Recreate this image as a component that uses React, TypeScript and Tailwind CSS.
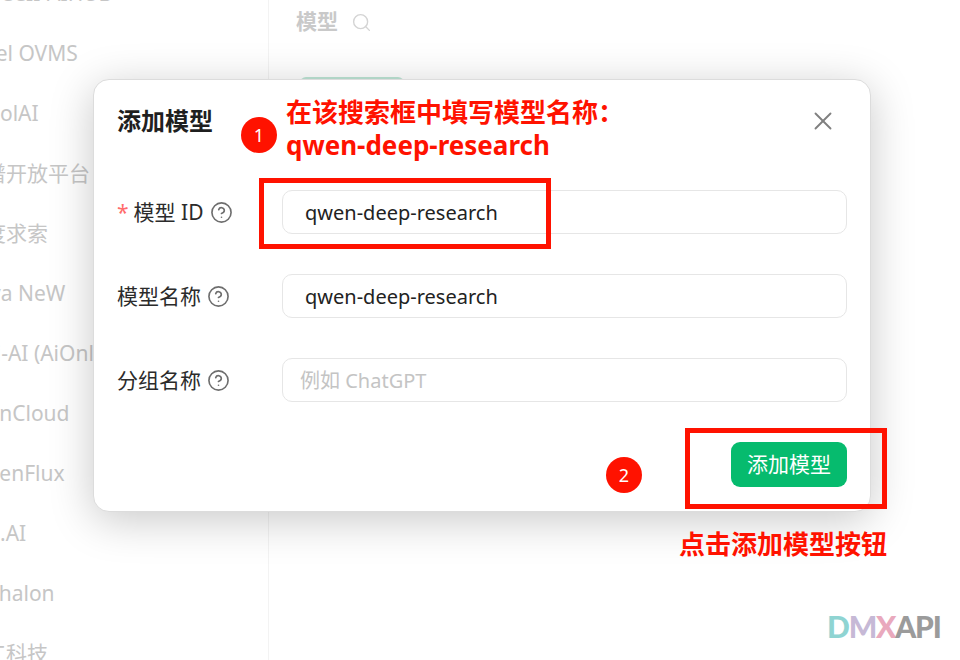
import React from 'react';
import { CircleHelp, Search, X } from 'lucide-react';

const fontStack = "font-['Noto_Sans','Noto_Sans_CJK_SC',sans-serif]";

const providers = [
  { name: 'CCII-AIHUB', cls: 'ml-0' },
  { name: 'Intel OVMS', cls: '-ml-[32px]' },
  { name: 'CoolAI', cls: '-ml-[26px]' },
  { name: '智谱开放平台', cls: '-ml-[36px]' },
  { name: '深度求索', cls: '-ml-[36px]' },
  { name: 'Kuya NeW', cls: '-ml-[36px]' },
  { name: 'Infini-AI (AiOnly)', cls: '-ml-[50px]' },
  { name: 'GreenCloud', cls: '-ml-[48px]' },
  { name: 'OpenFlux', cls: '-ml-[30px]' },
  { name: '302.AI', cls: '-ml-[36px]' },
  { name: 'Phalon', cls: '-ml-[14px]' },
  { name: '天工科技', cls: '-ml-[36px]' },
];

const FieldRow = ({
  label,
  required,
  value,
  placeholder,
}: {
  label: string;
  required?: boolean;
  value?: string;
  placeholder?: string;
}) => (
  <div className="flex items-center h-[44px]">
    <div className="w-[165px] flex items-center text-[21px] pt-[1px] text-[#2b2b2b]">
      {required && <span className="text-[#ff6b6b] mr-[5px] text-[21px]">*</span>}
      <span>{label}</span>
      <CircleHelp className="ml-[6px] text-[#6e6e6e]" size={23} strokeWidth={1.7} />
    </div>
    <div className="flex-1 h-[44px] border border-[#e6e6e6] rounded-[10px] flex items-center pl-[22px] pt-[1px] text-[20px]">
      {value ? (
        <span className="text-[#222]">{value}</span>
      ) : (
        <span className="text-[#c4c4c4] -ml-[5px]">{placeholder}</span>
      )}
    </div>
  </div>
);

const App: React.FC = () => {
  return (
    <div className={`relative w-[960px] h-[660px] overflow-hidden bg-white ${fontStack}`}>
      {/* page behind the modal */}
      <div className="flex h-full">
        <div className="w-[269px] h-full border-r border-[#f3f3f3] overflow-hidden shrink-0">
          <div className="-mt-[36px]">
            {providers.map((p) => (
              <div key={p.name} className={`h-[60px] flex items-center text-[21px] text-[#c6c6c6] whitespace-nowrap ${p.cls}`}>
                {p.name}
              </div>
            ))}
          </div>
        </div>
        <div className="flex-1 pl-[27px]">
          <div className="flex items-center h-[44px] text-[21px] font-bold text-[#c9c9c9]">
            模型
            <Search className="ml-[13px] text-[#d4d4d4]" size={21} strokeWidth={1.6} />
          </div>
          <div className="ml-[4px] mt-[33px] w-[104px] h-[6px] rounded-t-[6px] bg-[#bfe6d6]" />
        </div>
      </div>

      {/* modal */}
      <div className="absolute left-[93px] top-[79px] w-[778px] h-[433px] bg-white rounded-[16px] border border-[#dcdcdc] shadow-[0_8px_44px_rgba(0,0,0,0.22)] px-[23px] flex flex-col">
        <div className="flex items-center justify-between h-[81px] pr-[9px]">
          <h2 className="text-[24px] font-bold text-[#1f1f1f]">添加模型</h2>
          <X className="text-[#808080]" size={30} strokeWidth={1.5} />
        </div>
        <div className="mt-[29px] flex flex-col gap-[40px]">
          <FieldRow label="模型 ID" required value="qwen-deep-research" />
          <FieldRow label="模型名称" value="qwen-deep-research" />
          <FieldRow label="分组名称" placeholder="例如 ChatGPT" />
        </div>
        <div className="mt-[40px] flex justify-end">
          <button className="w-[116px] h-[45px] rounded-[9px] bg-[#06bb6e] text-white text-[21px]">添加模型</button>
        </div>
      </div>

      {/* tutorial annotations */}
      <div className="absolute left-[241px] top-[117px] w-[36px] h-[36px] rounded-full bg-[#ff1200] text-white text-[18px] flex items-center justify-center">1</div>
      <div className="absolute left-[606px] top-[457px] w-[36px] h-[36px] rounded-full bg-[#ff1200] text-white text-[18px] flex items-center justify-center">2</div>
      <div className="absolute left-[286px] top-[94px] text-[#ff1200] font-bold">
        <div className="text-[26px] leading-[36px]">在该搜索框中填写模型名称：</div>
        <div className="text-[26px] leading-[31px]">qwen-deep-research</div>
      </div>
      <div className="absolute left-[259px] top-[178px] w-[292px] h-[71px] border-[5px] border-[#ff1200]" />
      <div className="absolute left-[685px] top-[428px] w-[202px] h-[81px] border-[5px] border-[#ff1200]" />
      <div className="absolute left-[679px] top-[526px] text-[26px] leading-[36px] font-bold text-[#ff1200] whitespace-nowrap">点击添加模型按钮</div>

      {/* watermark */}
      <div className="absolute left-[827px] top-[606px] text-[30px] leading-[40px] tracking-[-1.2px] font-black font-['Lato',sans-serif] whitespace-nowrap">
        <span className="text-[#8fd4d2]">D</span>
        <span className="text-[#c6b9d6]">M</span>
        <span className="text-[#e9a9bd]">X</span>
        <span className="text-[#9b9b9b]">API</span>
      </div>
    </div>
  );
};

export default App;
